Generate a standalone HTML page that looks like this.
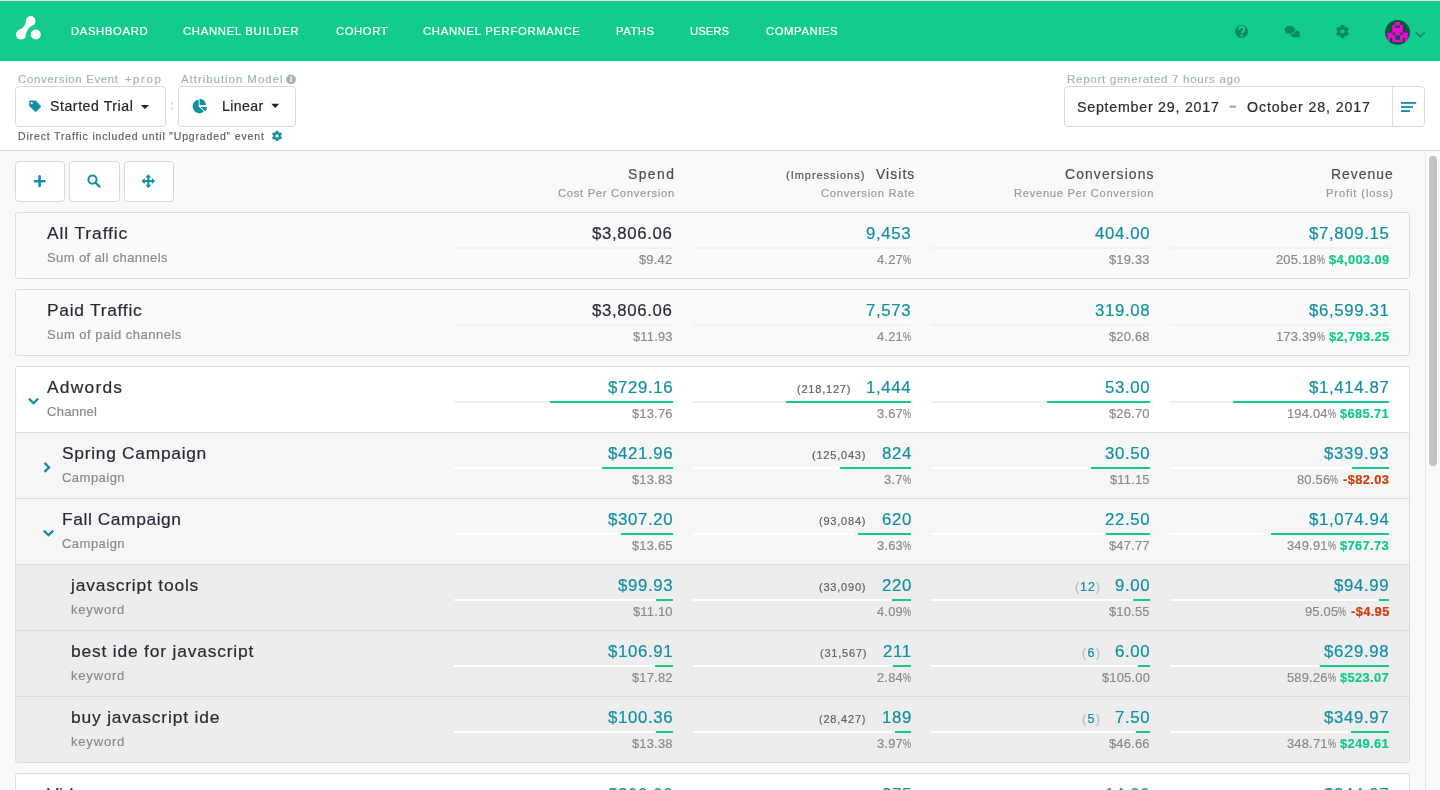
<!DOCTYPE html>
<html><head><meta charset="utf-8">
<style>
*{margin:0;padding:0;box-sizing:border-box}
html,body{width:1440px;height:790px;overflow:hidden;background:#f9f9f9;font-family:"Liberation Sans",sans-serif}
.a{position:absolute}
.t{position:absolute;white-space:nowrap;will-change:transform;-webkit-text-stroke:0.2px currentColor}
.bar{position:absolute;height:2px}
.pc{display:inline-block;transform:scaleX(.7);transform-origin:0 50%}
svg{position:absolute;overflow:visible}
</style></head><body>
<!-- top strip -->
<div class="a" style="left:0;top:0;width:1440px;height:1px;background:#e3dde0"></div>
<!-- nav -->
<div class="a" style="left:0;top:1px;width:1440px;height:60px;background:#12cb8c"></div>
<svg style="left:0;top:0" width="60" height="60" viewBox="0 0 60 60">
  <g fill="#fff"><circle cx="30.7" cy="20.8" r="4.8"/><circle cx="21" cy="34.6" r="5"/><circle cx="35.8" cy="34.5" r="5"/></g>
  <path d="M25.9 21.2 Q25.6 27 19 30 L19 34 L26.4 33 Q27.8 26.8 35.2 23.9 L33 18 Z" fill="#fff"/>
</svg>
<!-- help icon -->
<svg style="left:0;top:0" width="1440" height="60" viewBox="0 0 1440 60">
  <circle cx="1241.6" cy="31.5" r="6.5" fill="#068c5a"/>
  <path d="M1239.1 29.7 Q1239.1 26.9 1241.7 26.9 Q1244.3 26.9 1244.3 29.4 Q1244.3 30.9 1242.7 31.7 Q1241.7 32.2 1241.7 33.3" stroke="#12cb8c" stroke-width="2.1" fill="none"/>
  <circle cx="1241.7" cy="35.7" r="1.25" fill="#12cb8c"/>
  <!-- chat -->
  <ellipse cx="1295.2" cy="33.9" rx="4.7" ry="3.7" fill="#068c5a"/>
  <path d="M1297 36.6 L1299.9 37.9 L1299 35" fill="#068c5a"/>
  <ellipse cx="1289.8" cy="29.7" rx="6.2" ry="4.9" fill="#12cb8c"/>
  <ellipse cx="1289.8" cy="29.7" rx="5.2" ry="3.9" fill="#068c5a"/>
  <path d="M1286.2 32.6 L1284.8 34.4 L1288.3 33.3 Z" fill="#068c5a"/>
  <!-- gear -->
  <g transform="translate(1342.5 31.5)" fill="#068c5a">
    <circle r="5"/>
    <rect x="-1.8" y="-6.5" width="3.6" height="13" rx="0.4"/>
    <rect x="-1.8" y="-6.5" width="3.6" height="13" rx="0.4" transform="rotate(60)"/>
    <rect x="-1.8" y="-6.5" width="3.6" height="13" rx="0.4" transform="rotate(120)"/>
    <circle r="2.1" fill="#12cb8c"/>
  </g>
  <!-- avatar -->
  <circle cx="1397.5" cy="32.6" r="12.6" fill="#0a8a5c" opacity="0.5"/>
  <circle cx="1397.5" cy="32.3" r="12.3" fill="#07553f"/>
  <defs><clipPath id="av"><circle cx="1397.5" cy="32.3" r="12.3"/></clipPath></defs>
  <g clip-path="url(#av)">
  <g fill="#ff00d8">
    <rect x="1395.2" y="22.1" width="4.8" height="2.9"/>
    <rect x="1392.3" y="25" width="10.6" height="7.7"/>
    <rect x="1387.4" y="32.7" width="20.4" height="9.3"/>
  </g>
  <g fill="#07553f">
    <rect x="1395.2" y="25.4" width="4.8" height="2.4"/>
    <rect x="1392.7" y="32.7" width="2.3" height="2.3"/>
    <rect x="1400.3" y="32.7" width="2.2" height="2.3"/>
    <rect x="1395.2" y="35.2" width="4.8" height="4.6"/>
    <rect x="1390" y="37.8" width="2.3" height="5"/>
    <rect x="1402.9" y="37.8" width="2.2" height="5"/>
  </g></g>
  <path d="M1415.8 32.2 L1420.3 36.6 L1424.8 32.2" stroke="#068c5a" stroke-width="1.6" fill="none"/>
</svg>

<!-- filter area -->
<div class="a" style="left:0;top:61px;width:1440px;height:89px;background:#fff"></div>
<div class="a" style="left:0;top:150px;width:1440px;height:1px;background:#dadada"></div>
<div class="a" style="left:15px;top:86px;width:151px;height:41px;border:1px solid #d9d9d9;border-radius:4px;background:#fff"></div>
<div class="a" style="left:178px;top:86px;width:118px;height:41px;border:1px solid #d9d9d9;border-radius:4px;background:#fff"></div>
<div class="a" style="left:1064px;top:86px;width:360.5px;height:41px;border:1px solid #d9d9d9;border-radius:4px;background:#fff"></div>
<div class="a" style="left:1392px;top:87px;width:1px;height:39px;background:#dcdcdc"></div>
<svg style="left:0;top:0" width="1440" height="150" viewBox="0 0 1440 150">
  <!-- tag -->
  <path d="M29.2 101.5 Q29.2 100.6 30.1 100.6 L35.6 100.6 L40.9 106.1 Q41.2 106.5 40.9 106.9 L36.2 111.7 Q35.7 112.2 35.2 111.7 L29.5 106.2 Q29.2 105.9 29.2 105.5 Z" fill="#0f8fa1"/>
  <circle cx="31.6" cy="103.2" r="1.1" fill="#fff"/>
  <!-- caret -->
  <path d="M140.8 104.9 L149 104.9 L144.9 109.1 Z" fill="#24212f"/>
  <!-- colon -->
  <rect x="171" y="102.5" width="2" height="1.8" fill="#cfcfcf"/>
  <rect x="171" y="107.8" width="2" height="1.8" fill="#cfcfcf"/>
  <!-- pie -->
  <path d="M198.7 99.4 L198.7 106.6 L203.9 111.6 A6.9 6.9 0 1 1 198.7 99.4 Z" fill="#0f8fa1"/>
  <path d="M199.6 98.8 A6.3 6.3 0 0 1 205.9 104.9 L199.6 104.9 Z" fill="#0f8fa1"/>
  <path d="M200.6 106.9 L207.1 106.9 A6.9 6.9 0 0 1 205.2 111.4 Z" fill="#0f8fa1"/>
  <!-- caret 2 -->
  <path d="M271.2 103.8 L279.2 103.8 L275.2 108 Z" fill="#24212f"/>
  <!-- info -->
  <circle cx="291" cy="79.4" r="4.9" fill="#a5b3ad"/>
  <rect x="290.3" y="78.2" width="1.5" height="3.8" fill="#fff"/>
  <rect x="290.3" y="76.2" width="1.5" height="1.3" fill="#fff"/>
  <!-- gear teal -->
  <g transform="translate(277 135.9)" fill="#0f8fa1">
    <circle r="3.9"/>
    <rect x="-1.2" y="-5.2" width="2.4" height="10.4" rx="0.4"/>
    <rect x="-1.2" y="-5.2" width="2.4" height="10.4" rx="0.4" transform="rotate(60)"/>
    <rect x="-1.2" y="-5.2" width="2.4" height="10.4" rx="0.4" transform="rotate(120)"/>
    <circle r="1.7" fill="#fff"/>
  </g>
  <!-- dash -->
  <rect x="1229.5" y="105.6" width="6.6" height="2" fill="#a0a0a0"/>
  <!-- sort icon -->
  <rect x="1401" y="102" width="15" height="1.8" fill="#0f8fa1"/>
  <rect x="1401" y="106.1" width="12" height="1.8" fill="#0f8fa1"/>
  <rect x="1401" y="110.2" width="9" height="1.8" fill="#0f8fa1"/>
</svg>

<!-- scrollbar -->
<div class="a" style="left:1425px;top:151px;width:15px;height:639px;background:#fafafa;border-left:1px solid #e8e8e8"></div>
<div class="a" style="left:1429px;top:156px;width:8px;height:310px;background:#c3c3c3;border-radius:4px"></div>

<!-- buttons -->
<div class="a" style="left:15px;top:161px;width:50px;height:41px;border:1px solid #d9d9d9;border-radius:4px;background:#fff"></div>
<div class="a" style="left:69px;top:161px;width:51px;height:41px;border:1px solid #d9d9d9;border-radius:4px;background:#fff"></div>
<div class="a" style="left:124px;top:161px;width:50px;height:41px;border:1px solid #d9d9d9;border-radius:4px;background:#fff"></div>
<svg style="left:0;top:0" width="200" height="210" viewBox="0 0 200 210">
  <path d="M35 181.2 L44.3 181.2 M39.6 176.4 L39.6 186" stroke="#0f8fa1" stroke-width="2.6" stroke-linecap="round"/>
  <circle cx="92.5" cy="179.6" r="4.1" stroke="#0f8fa1" stroke-width="2" fill="none"/>
  <path d="M95.6 182.7 L99.6 186.7" stroke="#0f8fa1" stroke-width="2.2" stroke-linecap="round"/>
  <g fill="#0f8fa1" transform="translate(148.3 181.1)">
    <rect x="-1" y="-5" width="2" height="10"/>
    <rect x="-5" y="-1" width="10" height="2"/>
    <path d="M0 -6.8 L-3 -3.6 L3 -3.6 Z M0 6.8 L-3 3.6 L3 3.6 Z M-6.8 0 L-3.6 -3 L-3.6 3 Z M6.8 0 L3.6 -3 L3.6 3 Z"/>
  </g>
</svg>

<!-- summary boxes -->
<div class="a" style="left:15px;top:212px;width:1394.5px;height:67px;border:1px solid #dcdcdc;border-radius:3px;background:#fafafa"></div>
<div class="a" style="left:15px;top:289px;width:1394.5px;height:67px;border:1px solid #dcdcdc;border-radius:3px;background:#fafafa"></div>
<!-- main table -->
<div class="a" style="left:15px;top:366px;width:1394.5px;height:397px;border:1px solid #dcdcdc;border-radius:3px;background:#fff;overflow:hidden">
  <div class="a" style="left:0;top:65px;width:100%;height:66px;background:#f6f6f6;border-top:1px solid #dcdcdc"></div>
  <div class="a" style="left:0;top:131px;width:100%;height:66px;background:#f6f6f6;border-top:1px solid #dcdcdc"></div>
  <div class="a" style="left:0;top:197px;width:100%;height:66px;background:#ededed;border-top:1px solid #dcdcdc"></div>
  <div class="a" style="left:0;top:263px;width:100%;height:66px;background:#ededed;border-top:1px solid #dcdcdc"></div>
  <div class="a" style="left:0;top:329px;width:100%;height:66px;background:#ededed;border-top:1px solid #dcdcdc"></div>
</div>
<div class="a" style="left:15px;top:773px;width:1394.5px;height:40px;border:1px solid #dcdcdc;border-radius:3px;background:#fff"></div>

<!-- chevrons -->
<svg style="left:0;top:0" width="80" height="560" viewBox="0 0 80 560">
  <path d="M28.9 398.6 L33.5 403.2 L38.1 398.6" stroke="#0f8fa1" stroke-width="2.2" fill="none"/>
  <path d="M44.5 462.9 L49.1 467.4 L44.5 471.9" stroke="#0f8fa1" stroke-width="2.2" fill="none"/>
  <path d="M43.8 530.6 L48.5 535.3 L53.3 530.6" stroke="#0f8fa1" stroke-width="2.2" fill="none"/>
</svg>

<div class="bar" style="left:454px;top:247px;width:219px;background:#f2f2f2"></div>
<div class="bar" style="left:693px;top:247px;width:218px;background:#f2f2f2"></div>
<div class="bar" style="left:931px;top:247px;width:219px;background:#f2f2f2"></div>
<div class="bar" style="left:1170px;top:247px;width:219px;background:#f2f2f2"></div>
<div class="bar" style="left:454px;top:324px;width:219px;background:#f2f2f2"></div>
<div class="bar" style="left:693px;top:324px;width:218px;background:#f2f2f2"></div>
<div class="bar" style="left:931px;top:324px;width:219px;background:#f2f2f2"></div>
<div class="bar" style="left:1170px;top:324px;width:219px;background:#f2f2f2"></div>
<div class="bar" style="left:454px;top:401px;width:219px;background:#efefef"></div>
<div class="bar" style="left:693px;top:401px;width:218px;background:#efefef"></div>
<div class="bar" style="left:931px;top:401px;width:219px;background:#efefef"></div>
<div class="bar" style="left:1170px;top:401px;width:219px;background:#efefef"></div>
<div class="bar" style="left:550px;top:401px;width:123px;background:#13c98b"></div>
<div class="bar" style="left:786px;top:401px;width:125px;background:#13c98b"></div>
<div class="bar" style="left:1047px;top:401px;width:103px;background:#13c98b"></div>
<div class="bar" style="left:1233px;top:401px;width:156px;background:#13c98b"></div>
<div class="bar" style="left:454px;top:467px;width:219px;background:#ffffff"></div>
<div class="bar" style="left:693px;top:467px;width:218px;background:#ffffff"></div>
<div class="bar" style="left:931px;top:467px;width:219px;background:#ffffff"></div>
<div class="bar" style="left:1170px;top:467px;width:219px;background:#ffffff"></div>
<div class="bar" style="left:602px;top:467px;width:71px;background:#13c98b"></div>
<div class="bar" style="left:840px;top:467px;width:71px;background:#13c98b"></div>
<div class="bar" style="left:1091px;top:467px;width:59px;background:#13c98b"></div>
<div class="bar" style="left:1352px;top:467px;width:37px;background:#13c98b"></div>
<div class="bar" style="left:454px;top:533px;width:219px;background:#ffffff"></div>
<div class="bar" style="left:693px;top:533px;width:218px;background:#ffffff"></div>
<div class="bar" style="left:931px;top:533px;width:219px;background:#ffffff"></div>
<div class="bar" style="left:1170px;top:533px;width:219px;background:#ffffff"></div>
<div class="bar" style="left:621px;top:533px;width:52px;background:#13c98b"></div>
<div class="bar" style="left:858px;top:533px;width:53px;background:#13c98b"></div>
<div class="bar" style="left:1106px;top:533px;width:44px;background:#13c98b"></div>
<div class="bar" style="left:1271px;top:533px;width:118px;background:#13c98b"></div>
<div class="bar" style="left:454px;top:599px;width:219px;background:#ffffff"></div>
<div class="bar" style="left:693px;top:599px;width:218px;background:#ffffff"></div>
<div class="bar" style="left:931px;top:599px;width:219px;background:#ffffff"></div>
<div class="bar" style="left:1170px;top:599px;width:219px;background:#ffffff"></div>
<div class="bar" style="left:656px;top:599px;width:17px;background:#13c98b"></div>
<div class="bar" style="left:892px;top:599px;width:19px;background:#13c98b"></div>
<div class="bar" style="left:1133px;top:599px;width:17px;background:#13c98b"></div>
<div class="bar" style="left:1379px;top:599px;width:10px;background:#13c98b"></div>
<div class="bar" style="left:454px;top:665px;width:219px;background:#ffffff"></div>
<div class="bar" style="left:693px;top:665px;width:218px;background:#ffffff"></div>
<div class="bar" style="left:931px;top:665px;width:219px;background:#ffffff"></div>
<div class="bar" style="left:1170px;top:665px;width:219px;background:#ffffff"></div>
<div class="bar" style="left:655px;top:665px;width:18px;background:#13c98b"></div>
<div class="bar" style="left:893px;top:665px;width:18px;background:#13c98b"></div>
<div class="bar" style="left:1138px;top:665px;width:12px;background:#13c98b"></div>
<div class="bar" style="left:1320px;top:665px;width:69px;background:#13c98b"></div>
<div class="bar" style="left:454px;top:731px;width:219px;background:#ffffff"></div>
<div class="bar" style="left:693px;top:731px;width:218px;background:#ffffff"></div>
<div class="bar" style="left:931px;top:731px;width:219px;background:#ffffff"></div>
<div class="bar" style="left:1170px;top:731px;width:219px;background:#ffffff"></div>
<div class="bar" style="left:656px;top:731px;width:17px;background:#13c98b"></div>
<div class="bar" style="left:895px;top:731px;width:16px;background:#13c98b"></div>
<div class="bar" style="left:1136px;top:731px;width:14px;background:#13c98b"></div>
<div class="bar" style="left:1351px;top:731px;width:38px;background:#13c98b"></div>
<div class="bar" style="left:454px;top:808px;width:219px;background:#efefef"></div>
<div class="bar" style="left:693px;top:808px;width:218px;background:#efefef"></div>
<div class="bar" style="left:931px;top:808px;width:219px;background:#efefef"></div>
<div class="bar" style="left:1170px;top:808px;width:219px;background:#efefef"></div>
<div class="t" style="left:70.60px;top:26px;font-size:11.3px;line-height:11.3px;color:#ffffff;letter-spacing:0.630px;">DASHBOARD</div>
<div class="t" style="left:183.30px;top:26px;font-size:11.3px;line-height:11.3px;color:#ffffff;letter-spacing:0.708px;">CHANNEL BUILDER</div>
<div class="t" style="left:335.70px;top:26px;font-size:11.3px;line-height:11.3px;color:#ffffff;letter-spacing:0.571px;">COHORT</div>
<div class="t" style="left:423.30px;top:26px;font-size:11.3px;line-height:11.3px;color:#ffffff;letter-spacing:0.678px;">CHANNEL PERFORMANCE</div>
<div class="t" style="left:616.30px;top:26px;font-size:11.3px;line-height:11.3px;color:#ffffff;letter-spacing:0.503px;">PATHS</div>
<div class="t" style="left:690.30px;top:26px;font-size:11.3px;line-height:11.3px;color:#ffffff;letter-spacing:0.020px;">USERS</div>
<div class="t" style="left:765.70px;top:26px;font-size:11.3px;line-height:11.3px;color:#ffffff;letter-spacing:0.581px;">COMPANIES</div>
<div class="t" style="left:17.80px;top:74px;font-size:11.5px;line-height:11.5px;color:#a5b6ae;letter-spacing:0.615px;">Conversion Event</div>
<div class="t" style="left:125.00px;top:74px;font-size:11.5px;line-height:11.5px;color:#a5b6ae;letter-spacing:0.000px;">+</div>
<div class="t" style="left:133.00px;top:74px;font-size:11.5px;line-height:11.5px;color:#a5b6ae;letter-spacing:1.661px;">prop</div>
<div class="t" style="left:180.50px;top:74px;font-size:11.5px;line-height:11.5px;color:#a5b6ae;letter-spacing:0.950px;">Attribution Model</div>
<div class="t" style="left:50.20px;top:99px;font-size:14.1px;line-height:14.1px;color:#24212f;letter-spacing:0.572px;">Started Trial</div>
<div class="t" style="left:221.60px;top:99px;font-size:14.1px;line-height:14.1px;color:#24212f;letter-spacing:0.404px;">Linear</div>
<div class="t" style="left:17.80px;top:131px;font-size:10.5px;line-height:10.5px;color:#5f5d66;letter-spacing:0.850px;">Direct Traffic included until ”Upgraded” event</div>
<div class="t" style="left:1066.60px;top:74px;font-size:11.5px;line-height:11.5px;color:#a5b6ae;letter-spacing:0.728px;">Report generated 7 hours ago</div>
<div class="t" style="left:1076.50px;top:100px;font-size:14.2px;line-height:14.2px;color:#2b2937;letter-spacing:0.778px;">September 29, 2017</div>
<div class="t" style="left:1246.80px;top:100px;font-size:14.2px;line-height:14.2px;color:#2b2937;letter-spacing:0.891px;">October 28, 2017</div>
<div class="t" style="left:628.00px;top:168px;font-size:13.9px;line-height:13.9px;color:#4c4a56;letter-spacing:1.433px;">Spend</div>
<div class="t" style="left:557.80px;top:188px;font-size:11.2px;line-height:11.2px;color:#9a9a9a;letter-spacing:0.716px;">Cost Per Conversion</div>
<div class="t" style="left:875.60px;top:168px;font-size:13.9px;line-height:13.9px;color:#4c4a56;letter-spacing:1.073px;">Visits</div>
<div class="t" style="left:786.10px;top:170px;font-size:11px;line-height:11px;color:#55535d;letter-spacing:0.973px;">(Impressions)</div>
<div class="t" style="left:820.60px;top:188px;font-size:11.2px;line-height:11.2px;color:#9a9a9a;letter-spacing:0.712px;">Conversion Rate</div>
<div class="t" style="left:1065.00px;top:168px;font-size:13.9px;line-height:13.9px;color:#4c4a56;letter-spacing:1.129px;">Conversions</div>
<div class="t" style="left:1014.00px;top:188px;font-size:11.2px;line-height:11.2px;color:#9a9a9a;letter-spacing:0.691px;">Revenue Per Conversion</div>
<div class="t" style="left:1331.30px;top:168px;font-size:13.9px;line-height:13.9px;color:#4c4a56;letter-spacing:1.016px;">Revenue</div>
<div class="t" style="left:1326.00px;top:188px;font-size:11.2px;line-height:11.2px;color:#9a9a9a;letter-spacing:0.870px;">Profit (loss)</div>
<div class="t" style="left:46.90px;top:225px;font-size:17.4px;line-height:17.4px;color:#2b2937;letter-spacing:0.909px;">All Traffic</div>
<div class="t" style="left:46.90px;top:251px;font-size:13px;line-height:13px;color:#8a8a8a;letter-spacing:0.386px;">Sum of all channels</div>
<div class="t" style="left:592.44px;top:226px;font-size:16.8px;line-height:16.8px;color:#2b2937;letter-spacing:0.650px;">$3,806.06</div>
<div class="t" style="left:866.41px;top:226px;font-size:16.8px;line-height:16.8px;color:#0f8fa1;letter-spacing:0.650px;">9,453</div>
<div class="t" style="left:1095.22px;top:226px;font-size:16.8px;line-height:16.8px;color:#0f8fa1;letter-spacing:0.650px;">404.00</div>
<div class="t" style="left:1309.14px;top:226px;font-size:16.8px;line-height:16.8px;color:#0f8fa1;letter-spacing:0.650px;">$7,809.15</div>
<div class="t" style="left:639.24px;top:254px;font-size:12.9px;line-height:12.9px;color:#8a8a8a;letter-spacing:0.200px;">$9.42</div>
<div class="t" style="left:877.09px;top:254px;font-size:12.9px;line-height:12.9px;color:#8a8a8a;letter-spacing:0.200px;">4.27<span class="pc" style="margin-right:-3.44px">%</span></div>
<div class="t" style="left:1109.37px;top:254px;font-size:12.9px;line-height:12.9px;color:#8a8a8a;letter-spacing:0.200px;">$19.33</div>
<div class="t" style="left:1328.85px;top:254px;font-size:12.9px;line-height:12.9px;color:#13c98b;letter-spacing:0.350px;font-weight:700;">$4,003.09</div>
<div class="t" style="left:1275.70px;top:254px;font-size:12.9px;line-height:12.9px;color:#8a8a8a;letter-spacing:0.200px;">205.18<span class="pc" style="margin-right:-3.44px">%</span></div>
<div class="t" style="left:46.90px;top:302px;font-size:17.4px;line-height:17.4px;color:#2b2937;letter-spacing:0.728px;">Paid Traffic</div>
<div class="t" style="left:46.90px;top:328px;font-size:13px;line-height:13px;color:#8a8a8a;letter-spacing:0.488px;">Sum of paid channels</div>
<div class="t" style="left:592.44px;top:303px;font-size:16.8px;line-height:16.8px;color:#2b2937;letter-spacing:0.650px;">$3,806.06</div>
<div class="t" style="left:866.41px;top:303px;font-size:16.8px;line-height:16.8px;color:#0f8fa1;letter-spacing:0.650px;">7,573</div>
<div class="t" style="left:1095.22px;top:303px;font-size:16.8px;line-height:16.8px;color:#0f8fa1;letter-spacing:0.650px;">319.08</div>
<div class="t" style="left:1309.14px;top:303px;font-size:16.8px;line-height:16.8px;color:#0f8fa1;letter-spacing:0.650px;">$6,599.31</div>
<div class="t" style="left:632.83px;top:331px;font-size:12.9px;line-height:12.9px;color:#8a8a8a;letter-spacing:0.200px;">$11.93</div>
<div class="t" style="left:877.09px;top:331px;font-size:12.9px;line-height:12.9px;color:#8a8a8a;letter-spacing:0.200px;">4.21<span class="pc" style="margin-right:-3.44px">%</span></div>
<div class="t" style="left:1109.37px;top:331px;font-size:12.9px;line-height:12.9px;color:#8a8a8a;letter-spacing:0.200px;">$20.68</div>
<div class="t" style="left:1328.85px;top:331px;font-size:12.9px;line-height:12.9px;color:#13c98b;letter-spacing:0.350px;font-weight:700;">$2,793.25</div>
<div class="t" style="left:1275.70px;top:331px;font-size:12.9px;line-height:12.9px;color:#8a8a8a;letter-spacing:0.200px;">173.39<span class="pc" style="margin-right:-3.44px">%</span></div>
<div class="t" style="left:46.90px;top:379px;font-size:17.4px;line-height:17.4px;color:#2b2937;letter-spacing:1.223px;">Adwords</div>
<div class="t" style="left:46.90px;top:405px;font-size:13px;line-height:13px;color:#8a8a8a;letter-spacing:0.262px;">Channel</div>
<div class="t" style="left:607.74px;top:380px;font-size:16.8px;line-height:16.8px;color:#0f8fa1;letter-spacing:0.650px;">$729.16</div>
<div class="t" style="left:866.41px;top:380px;font-size:16.8px;line-height:16.8px;color:#0f8fa1;letter-spacing:0.650px;">1,444</div>
<div class="t" style="left:1105.21px;top:380px;font-size:16.8px;line-height:16.8px;color:#0f8fa1;letter-spacing:0.650px;">53.00</div>
<div class="t" style="left:1309.14px;top:380px;font-size:16.8px;line-height:16.8px;color:#0f8fa1;letter-spacing:0.650px;">$1,414.87</div>
<div class="t" style="left:631.87px;top:408px;font-size:12.9px;line-height:12.9px;color:#8a8a8a;letter-spacing:0.200px;">$13.76</div>
<div class="t" style="left:877.09px;top:408px;font-size:12.9px;line-height:12.9px;color:#8a8a8a;letter-spacing:0.200px;">3.67<span class="pc" style="margin-right:-3.44px">%</span></div>
<div class="t" style="left:1109.37px;top:408px;font-size:12.9px;line-height:12.9px;color:#8a8a8a;letter-spacing:0.200px;">$26.70</div>
<div class="t" style="left:1340.30px;top:408px;font-size:12.9px;line-height:12.9px;color:#13c98b;letter-spacing:0.350px;font-weight:700;">$685.71</div>
<div class="t" style="left:1287.15px;top:408px;font-size:12.9px;line-height:12.9px;color:#8a8a8a;letter-spacing:0.200px;">194.04<span class="pc" style="margin-right:-3.44px">%</span></div>
<div class="t" style="left:797.00px;top:384px;font-size:11px;line-height:11px;color:#605e68;letter-spacing:0.790px;">(218,127)</div>
<div class="t" style="left:61.60px;top:445px;font-size:17.4px;line-height:17.4px;color:#2b2937;letter-spacing:0.709px;">Spring Campaign</div>
<div class="t" style="left:61.60px;top:471px;font-size:13px;line-height:13px;color:#8a8a8a;letter-spacing:0.478px;">Campaign</div>
<div class="t" style="left:607.74px;top:446px;font-size:16.8px;line-height:16.8px;color:#0f8fa1;letter-spacing:0.650px;">$421.96</div>
<div class="t" style="left:881.70px;top:446px;font-size:16.8px;line-height:16.8px;color:#0f8fa1;letter-spacing:0.650px;">824</div>
<div class="t" style="left:1105.21px;top:446px;font-size:16.8px;line-height:16.8px;color:#0f8fa1;letter-spacing:0.650px;">30.50</div>
<div class="t" style="left:1324.44px;top:446px;font-size:16.8px;line-height:16.8px;color:#0f8fa1;letter-spacing:0.650px;">$339.93</div>
<div class="t" style="left:631.87px;top:474px;font-size:12.9px;line-height:12.9px;color:#8a8a8a;letter-spacing:0.200px;">$13.83</div>
<div class="t" style="left:884.46px;top:474px;font-size:12.9px;line-height:12.9px;color:#8a8a8a;letter-spacing:0.200px;">3.7<span class="pc" style="margin-right:-3.44px">%</span></div>
<div class="t" style="left:1110.33px;top:474px;font-size:12.9px;line-height:12.9px;color:#8a8a8a;letter-spacing:0.200px;">$11.15</div>
<div class="t" style="left:1343.18px;top:474px;font-size:12.9px;line-height:12.9px;color:#d23c0a;letter-spacing:0.350px;font-weight:700;">-$82.03</div>
<div class="t" style="left:1297.40px;top:474px;font-size:12.9px;line-height:12.9px;color:#8a8a8a;letter-spacing:0.200px;">80.56<span class="pc" style="margin-right:-3.44px">%</span></div>
<div class="t" style="left:812.29px;top:450px;font-size:11px;line-height:11px;color:#605e68;letter-spacing:0.790px;">(125,043)</div>
<div class="t" style="left:61.60px;top:511px;font-size:17.4px;line-height:17.4px;color:#2b2937;letter-spacing:0.573px;">Fall Campaign</div>
<div class="t" style="left:61.60px;top:537px;font-size:13px;line-height:13px;color:#8a8a8a;letter-spacing:0.478px;">Campaign</div>
<div class="t" style="left:607.74px;top:512px;font-size:16.8px;line-height:16.8px;color:#0f8fa1;letter-spacing:0.650px;">$307.20</div>
<div class="t" style="left:881.70px;top:512px;font-size:16.8px;line-height:16.8px;color:#0f8fa1;letter-spacing:0.650px;">620</div>
<div class="t" style="left:1105.21px;top:512px;font-size:16.8px;line-height:16.8px;color:#0f8fa1;letter-spacing:0.650px;">22.50</div>
<div class="t" style="left:1309.14px;top:512px;font-size:16.8px;line-height:16.8px;color:#0f8fa1;letter-spacing:0.650px;">$1,074.94</div>
<div class="t" style="left:631.87px;top:540px;font-size:12.9px;line-height:12.9px;color:#8a8a8a;letter-spacing:0.200px;">$13.65</div>
<div class="t" style="left:877.09px;top:540px;font-size:12.9px;line-height:12.9px;color:#8a8a8a;letter-spacing:0.200px;">3.63<span class="pc" style="margin-right:-3.44px">%</span></div>
<div class="t" style="left:1109.37px;top:540px;font-size:12.9px;line-height:12.9px;color:#8a8a8a;letter-spacing:0.200px;">$47.77</div>
<div class="t" style="left:1340.30px;top:540px;font-size:12.9px;line-height:12.9px;color:#13c98b;letter-spacing:0.350px;font-weight:700;">$767.73</div>
<div class="t" style="left:1287.15px;top:540px;font-size:12.9px;line-height:12.9px;color:#8a8a8a;letter-spacing:0.200px;">349.91<span class="pc" style="margin-right:-3.44px">%</span></div>
<div class="t" style="left:819.20px;top:516px;font-size:11px;line-height:11px;color:#605e68;letter-spacing:0.790px;">(93,084)</div>
<div class="t" style="left:71.00px;top:577px;font-size:17.4px;line-height:17.4px;color:#2b2937;letter-spacing:0.819px;">javascript tools</div>
<div class="t" style="left:71.00px;top:603px;font-size:13px;line-height:13px;color:#8a8a8a;letter-spacing:0.815px;">keyword</div>
<div class="t" style="left:617.72px;top:578px;font-size:16.8px;line-height:16.8px;color:#0f8fa1;letter-spacing:0.650px;">$99.93</div>
<div class="t" style="left:881.70px;top:578px;font-size:16.8px;line-height:16.8px;color:#0f8fa1;letter-spacing:0.650px;">220</div>
<div class="t" style="left:1115.19px;top:578px;font-size:16.8px;line-height:16.8px;color:#0f8fa1;letter-spacing:0.650px;">9.00</div>
<div class="t" style="left:1334.42px;top:578px;font-size:16.8px;line-height:16.8px;color:#0f8fa1;letter-spacing:0.650px;">$94.99</div>
<div class="t" style="left:632.83px;top:606px;font-size:12.9px;line-height:12.9px;color:#8a8a8a;letter-spacing:0.200px;">$11.10</div>
<div class="t" style="left:877.09px;top:606px;font-size:12.9px;line-height:12.9px;color:#8a8a8a;letter-spacing:0.200px;">4.09<span class="pc" style="margin-right:-3.44px">%</span></div>
<div class="t" style="left:1109.37px;top:606px;font-size:12.9px;line-height:12.9px;color:#8a8a8a;letter-spacing:0.200px;">$10.55</div>
<div class="t" style="left:1350.70px;top:606px;font-size:12.9px;line-height:12.9px;color:#d23c0a;letter-spacing:0.350px;font-weight:700;">-$4.95</div>
<div class="t" style="left:1304.92px;top:606px;font-size:12.9px;line-height:12.9px;color:#8a8a8a;letter-spacing:0.200px;">95.05<span class="pc" style="margin-right:-3.44px">%</span></div>
<div class="t" style="left:819.20px;top:582px;font-size:11px;line-height:11px;color:#605e68;letter-spacing:0.790px;">(33,090)</div>
<div class="t" style="left:1074.89px;top:581px;font-size:12.5px;line-height:12.5px;color:#0f8fa1;letter-spacing:0.924px;"><span style="color:#b9bdbb">(</span>12<span style="color:#b9bdbb">)</span></div>
<div class="t" style="left:71.00px;top:643px;font-size:17.4px;line-height:17.4px;color:#2b2937;letter-spacing:0.817px;">best ide for javascript</div>
<div class="t" style="left:71.00px;top:669px;font-size:13px;line-height:13px;color:#8a8a8a;letter-spacing:0.815px;">keyword</div>
<div class="t" style="left:607.74px;top:644px;font-size:16.8px;line-height:16.8px;color:#0f8fa1;letter-spacing:0.650px;">$106.91</div>
<div class="t" style="left:882.95px;top:644px;font-size:16.8px;line-height:16.8px;color:#0f8fa1;letter-spacing:0.650px;">211</div>
<div class="t" style="left:1115.19px;top:644px;font-size:16.8px;line-height:16.8px;color:#0f8fa1;letter-spacing:0.650px;">6.00</div>
<div class="t" style="left:1324.44px;top:644px;font-size:16.8px;line-height:16.8px;color:#0f8fa1;letter-spacing:0.650px;">$629.98</div>
<div class="t" style="left:631.87px;top:672px;font-size:12.9px;line-height:12.9px;color:#8a8a8a;letter-spacing:0.200px;">$17.82</div>
<div class="t" style="left:877.09px;top:672px;font-size:12.9px;line-height:12.9px;color:#8a8a8a;letter-spacing:0.200px;">2.84<span class="pc" style="margin-right:-3.44px">%</span></div>
<div class="t" style="left:1102.00px;top:672px;font-size:12.9px;line-height:12.9px;color:#8a8a8a;letter-spacing:0.200px;">$105.00</div>
<div class="t" style="left:1340.30px;top:672px;font-size:12.9px;line-height:12.9px;color:#13c98b;letter-spacing:0.350px;font-weight:700;">$523.07</div>
<div class="t" style="left:1287.15px;top:672px;font-size:12.9px;line-height:12.9px;color:#8a8a8a;letter-spacing:0.200px;">589.26<span class="pc" style="margin-right:-3.44px">%</span></div>
<div class="t" style="left:820.45px;top:648px;font-size:11px;line-height:11px;color:#605e68;letter-spacing:0.790px;">(31,567)</div>
<div class="t" style="left:1081.89px;top:647px;font-size:12.5px;line-height:12.5px;color:#0f8fa1;letter-spacing:1.361px;"><span style="color:#b9bdbb">(</span>6<span style="color:#b9bdbb">)</span></div>
<div class="t" style="left:71.00px;top:709px;font-size:17.4px;line-height:17.4px;color:#2b2937;letter-spacing:0.820px;">buy javascript ide</div>
<div class="t" style="left:71.00px;top:735px;font-size:13px;line-height:13px;color:#8a8a8a;letter-spacing:0.815px;">keyword</div>
<div class="t" style="left:607.74px;top:710px;font-size:16.8px;line-height:16.8px;color:#0f8fa1;letter-spacing:0.650px;">$100.36</div>
<div class="t" style="left:881.70px;top:710px;font-size:16.8px;line-height:16.8px;color:#0f8fa1;letter-spacing:0.650px;">189</div>
<div class="t" style="left:1115.19px;top:710px;font-size:16.8px;line-height:16.8px;color:#0f8fa1;letter-spacing:0.650px;">7.50</div>
<div class="t" style="left:1324.44px;top:710px;font-size:16.8px;line-height:16.8px;color:#0f8fa1;letter-spacing:0.650px;">$349.97</div>
<div class="t" style="left:631.87px;top:738px;font-size:12.9px;line-height:12.9px;color:#8a8a8a;letter-spacing:0.200px;">$13.38</div>
<div class="t" style="left:877.09px;top:738px;font-size:12.9px;line-height:12.9px;color:#8a8a8a;letter-spacing:0.200px;">3.97<span class="pc" style="margin-right:-3.44px">%</span></div>
<div class="t" style="left:1109.37px;top:738px;font-size:12.9px;line-height:12.9px;color:#8a8a8a;letter-spacing:0.200px;">$46.66</div>
<div class="t" style="left:1340.30px;top:738px;font-size:12.9px;line-height:12.9px;color:#13c98b;letter-spacing:0.350px;font-weight:700;">$249.61</div>
<div class="t" style="left:1287.15px;top:738px;font-size:12.9px;line-height:12.9px;color:#8a8a8a;letter-spacing:0.200px;">348.71<span class="pc" style="margin-right:-3.44px">%</span></div>
<div class="t" style="left:819.20px;top:714px;font-size:11px;line-height:11px;color:#605e68;letter-spacing:0.790px;">(28,427)</div>
<div class="t" style="left:1081.89px;top:713px;font-size:12.5px;line-height:12.5px;color:#0f8fa1;letter-spacing:1.361px;"><span style="color:#b9bdbb">(</span>5<span style="color:#b9bdbb">)</span></div>
<div class="t" style="left:46.90px;top:786px;font-size:17.4px;line-height:17.4px;color:#2b2937;letter-spacing:0.750px;">Videos</div>
<div class="t" style="left:46.90px;top:812px;font-size:13px;line-height:13px;color:#8a8a8a;letter-spacing:0.400px;">Channel</div>
<div class="t" style="left:607.74px;top:787px;font-size:16.8px;line-height:16.8px;color:#0f8fa1;letter-spacing:0.650px;">$200.00</div>
<div class="t" style="left:881.70px;top:787px;font-size:16.8px;line-height:16.8px;color:#0f8fa1;letter-spacing:0.650px;">275</div>
<div class="t" style="left:1105.21px;top:787px;font-size:16.8px;line-height:16.8px;color:#0f8fa1;letter-spacing:0.650px;">14.00</div>
<div class="t" style="left:1324.44px;top:787px;font-size:16.8px;line-height:16.8px;color:#0f8fa1;letter-spacing:0.650px;">$244.97</div>
<div class="t" style="left:672.30px;top:815px;font-size:12.9px;line-height:12.9px;color:#8a8a8a;letter-spacing:0.200px;"></div>
<div class="t" style="left:911.00px;top:815px;font-size:12.9px;line-height:12.9px;color:#8a8a8a;letter-spacing:0.200px;"></div>
<div class="t" style="left:1149.80px;top:815px;font-size:12.9px;line-height:12.9px;color:#8a8a8a;letter-spacing:0.200px;"></div>
<div class="t" style="left:1389.00px;top:815px;font-size:12.9px;line-height:12.9px;color:#8a8a8a;letter-spacing:0.200px;"></div>
</body></html>
